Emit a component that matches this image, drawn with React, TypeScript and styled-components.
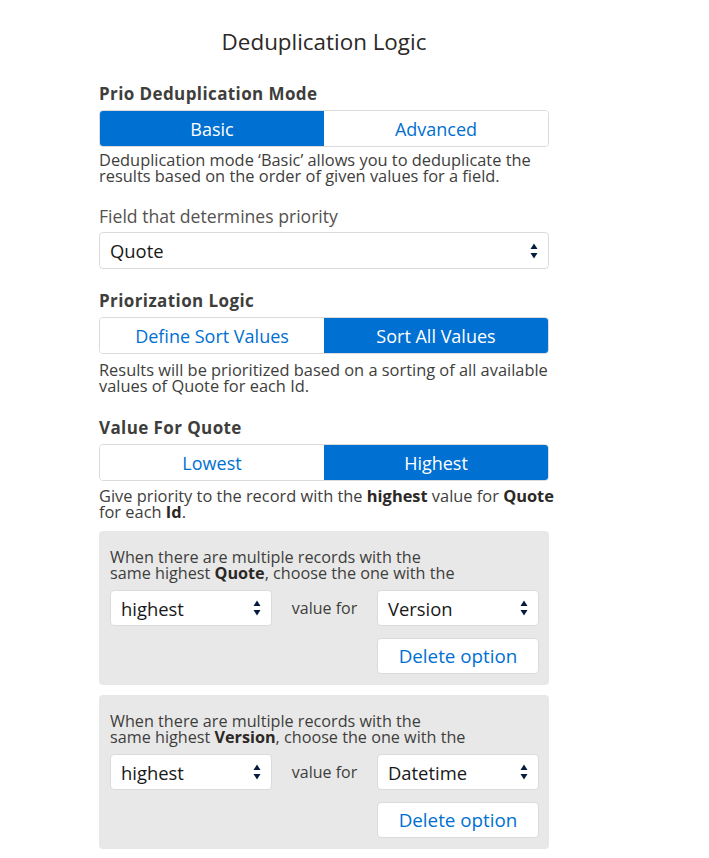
import React from 'react';
import styled, { createGlobalStyle } from 'styled-components';

const GlobalStyle = createGlobalStyle`
  body {
    margin: 0;
    background: #fff;
    font-family: "Open Sans", Lato, sans-serif;
    color: #3e3e3c;
  }
`;

const Page = styled.div`
  width: 450px;
  margin-left: 99px;
  padding-top: 27px;
`;

const Title = styled.h1`
  margin: 0 0 27px;
  text-align: center;
  font-size: 22.4px;
  line-height: 30px;
  font-weight: 400;
  color: #2b2826;
`;

const Section = styled.div<{ $gap?: number }>`
  margin-bottom: ${(p) => p.$gap ?? 22}px;
`;

const Label = styled.div<{ $bold?: boolean }>`
  font-size: ${(p) => (p.$bold ? 17 : 17.6)}px;
  letter-spacing: ${(p) => (p.$bold ? 0.4 : 0)}px;
  line-height: 20px;
  font-weight: ${(p) => (p.$bold ? 700 : 400)};
  color: ${(p) => (p.$bold ? '#3e3e3c' : '#54524f')};
  margin-bottom: 6px;
`;

const Segmented = styled.div`
  display: grid;
  grid-template-columns: 1fr 1fr;
  height: 37px;
  border: 1px solid #dddbda;
  border-radius: 4px;
  overflow: hidden;
  box-sizing: border-box;
`;

const SegButton = styled.button<{ $active?: boolean }>`
  border: none;
  margin: 0;
  padding: 0;
  font-family: inherit;
  font-size: 18px;
  background: ${(p) => (p.$active ? '#0070d2' : '#fff')};
  color: ${(p) => (p.$active ? '#fff' : '#0070d2')};
`;

const Help = styled.p<{ $top?: number }>`
  margin: ${(p) => p.$top ?? 5}px 0 0;
  font-size: 16.4px;
  line-height: 16px;
  color: #3e3e3c;
  white-space: nowrap;
  b {
    font-weight: 700;
    color: #2b2826;
  }
`;

const SelectBox = styled.div<{ $h?: number }>`
  display: flex;
  align-items: center;
  justify-content: space-between;
  height: ${(p) => p.$h ?? 37}px;
  padding: 0 10px;
  background: #fff;
  border: 1px solid #dddbda;
  border-radius: 4px;
  box-sizing: border-box;
  font-size: 18.4px;
  color: #181818;
`;

const Arrows = () => (
  <svg width="8" height="16" viewBox="0 0 8 16">
    <path d="M4 0.5 L7.5 6 H0.5 Z" fill="#061c3f" />
    <path d="M4 15.5 L7.5 10 H0.5 Z" fill="#061c3f" />
  </svg>
);

const Select: React.FC<{ value: string; h?: number }> = ({ value, h }) => (
  <SelectBox $h={h}>
    <span>{value}</span>
    <Arrows />
  </SelectBox>
);

const OptionBox = styled.div`
  background: #e8e8e8;
  border-radius: 4px;
  padding: 18px 10px 11px 11px;
  margin-bottom: 10px;
`;

const OptionText = styled.div`
  font-size: 16.2px;
  line-height: 16px;
  color: #3e3e3c;
  margin-bottom: 9px;
  white-space: nowrap;
  b {
    color: #2b2826;
  }
`;

const OptionRow = styled.div`
  display: grid;
  grid-template-columns: 162px 1fr 162px;
  align-items: center;
  row-gap: 12px;
`;

const ValueFor = styled.span`
  font-size: 16px;
  text-align: center;
  color: #3e3e3c;
`;

const DeleteButton = styled.button`
  grid-column: 3;
  height: 36px;
  padding: 0;
  background: #fff;
  border: 1px solid #dddbda;
  border-radius: 4px;
  font-family: inherit;
  font-size: 18.8px;
  color: #0070d2;
`;

const Option: React.FC<{ prev: string; field: string }> = ({ prev, field }) => (
  <OptionBox>
    <OptionText>
      When there are multiple records with the
      <br />
      same highest <b>{prev}</b>, choose the one with the
    </OptionText>
    <OptionRow>
      <Select value="highest" h={36} />
      <ValueFor>value for</ValueFor>
      <Select value={field} h={36} />
      <DeleteButton>Delete option</DeleteButton>
    </OptionRow>
  </OptionBox>
);

export default function App() {
  return (
    <>
      <GlobalStyle />
      <Page>
        <Title>Deduplication Logic</Title>

        <Section>
          <Label $bold>Prio Deduplication Mode</Label>
          <Segmented>
            <SegButton $active>Basic</SegButton>
            <SegButton>Advanced</SegButton>
          </Segmented>
          <Help>
            Deduplication mode ‘Basic’ allows you to deduplicate the
            <br />
            results based on the order of given values for a field.
          </Help>
        </Section>

        <Section>
          <Label>Field that determines priority</Label>
          <Select value="Quote" />
        </Section>

        <Section $gap={24}>
          <Label $bold>Priorization Logic</Label>
          <Segmented>
            <SegButton>Define Sort Values</SegButton>
            <SegButton $active>Sort All Values</SegButton>
          </Segmented>
          <Help $top={8}>
            Results will be prioritized based on a sorting of all available
            <br />
            values of Quote for each Id.
          </Help>
        </Section>

        <Section $gap={11}>
          <Label $bold>Value For Quote</Label>
          <Segmented>
            <SegButton>Lowest</SegButton>
            <SegButton $active>Highest</SegButton>
          </Segmented>
          <Help $top={7}>
            Give priority to the record with the <b>highest</b> value for <b>Quote</b>
            <br />
            for each <b>Id</b>.
          </Help>
        </Section>

        <Option prev="Quote" field="Version" />
        <Option prev="Version" field="Datetime" />
      </Page>
    </>
  );
}
